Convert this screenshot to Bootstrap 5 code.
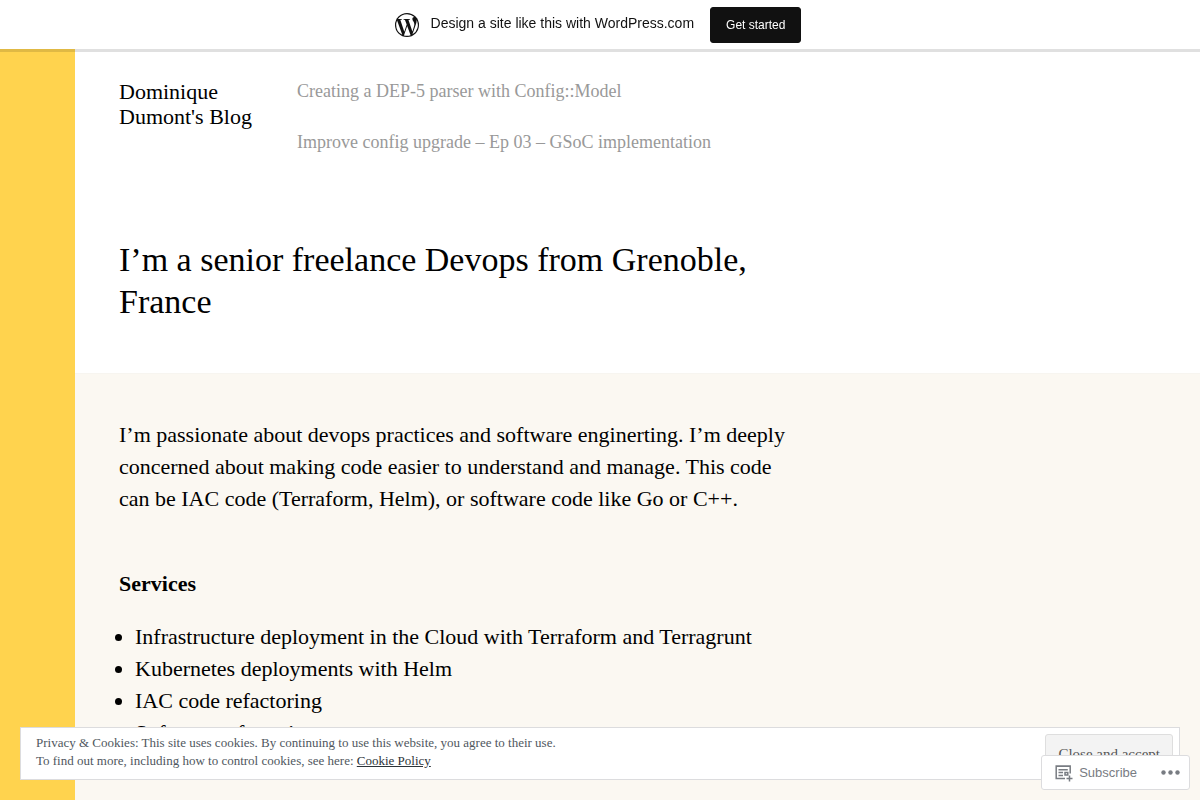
<!DOCTYPE html>
<html lang="en">
<head>
<meta charset="utf-8">
<meta name="viewport" content="width=device-width, initial-scale=1">
<title>Dominique Dumont's Blog</title>
<link href="https://cdn.jsdelivr.net/npm/bootstrap@5.3.0/dist/css/bootstrap.min.css" rel="stylesheet">
<style>
  body { font-family: "Liberation Serif", serif; color: #000; background: #fbf8f2; font-size: 22px; line-height: 32px; }
  .promo { font-family: "Liberation Sans", sans-serif; height: 49px; padding-right: 4px; box-shadow: 0 0 0 3px rgba(0,0,0,.12); font-size: 14px; line-height: 20px; color: #111; z-index: 1040; }
  .promo svg { margin-right: 12px; }
  .promo .btn { background: #111; color: #fff; font-size: 12px; line-height: 20px; padding: 7px 15px; border: 1px solid #111; border-radius: 3px; }
  .side { flex: 0 0 75px; background: #ffd34e; }
  .masthead { background: #fff; padding: 31px 44px 50px; border-bottom: 1px solid #f7f5f0; }
  .site-name { flex: 0 0 178px; font-size: 22px; line-height: 25px; color: #000; }
  .site-nav { gap: 26px; font-size: 18px; line-height: 25px; }
  .site-nav a { color: #999; }
  h1 { font-size: 34px; line-height: 42px; font-weight: 400; max-width: 662px; margin: 84px 0 0; }
  .entry { padding: 45px 44px 35px; max-width: 760px; }
  .entry p { margin-bottom: 53px; }
  h2 { font-size: 22px; line-height: 32px; font-weight: 700; margin-bottom: 21px; }
  .entry ul { padding-left: 16px; margin: 0; }
  .consent { margin: 20px; height: 53px; padding: 6px 6px 6px 15px; border: 1px solid #dcdcde; color: #50575e; font-size: 13px; line-height: 18px; }
  .consent a { color: #2c3338; }
  .consent .btn { align-self: flex-start; flex: none; font-size: 15px; line-height: 24px; padding: 7px 12px; color: #555; background: #f3f3f3; border: 1px solid #dedede; border-radius: 3px; }
  .follow { margin: 10px; height: 35px; padding: 0 9px 0 12px; font-family: "Liberation Sans", sans-serif; border: 1px solid #dcdcde; border-radius: 3px; z-index: 1050; }
  .follow button { font-size: 13px; line-height: 20px; color: #787c82; }
</style>
</head>
<body>
<div class="promo fixed-top bg-white d-flex justify-content-center align-items-center">
  <svg width="24" height="24" viewBox="0.4 0.4 15.2 15.2" aria-hidden="true">
    <circle cx="8" cy="8" r="7.6" fill="#111"/>
    <path fill="#fff" d="M12.633 7.653c0-.848-.305-1.435-.566-1.892l-.08-.13c-.317-.51-.594-.958-.594-1.48 0-.63.478-1.218 1.152-1.218q.03 0 .058.003l.031.003A6.84 6.84 0 0 0 8 1.137 6.86 6.86 0 0 0 2.266 4.23c.16.005.313.009.442.009.717 0 1.828-.087 1.828-.087.37-.022.414.521.044.565 0 0-.371.044-.785.065l2.5 7.434 1.5-4.506-1.07-2.929c-.369-.022-.719-.065-.719-.065-.37-.022-.326-.588.043-.566 0 0 1.134.087 1.808.087.718 0 1.83-.087 1.83-.087.37-.022.413.522.043.566 0 0-.372.043-.785.065l2.48 7.377.684-2.287.054-.173c.27-.86.469-1.495.469-2.046zM1.137 8a6.86 6.86 0 0 0 3.868 6.176L1.73 5.206A6.8 6.8 0 0 0 1.137 8M6.061 14.583 8.121 8.6l2.109 5.78q.02.05.049.094a6.85 6.85 0 0 1-4.218.109m7.96-9.876q.046.328.047.706c0 .696-.13 1.479-.522 2.458l-2.096 6.06a6.86 6.86 0 0 0 2.572-9.224"/>
  </svg>
  <span class="me-3 pb-1">Design a site like this with WordPress.com</span>
  <button type="button" class="btn">Get started</button>
</div>

<div class="d-flex min-vh-100">
  <div class="side"></div>
  <div class="flex-grow-1 pt-5">
    <header class="masthead">
      <div class="d-flex">
        <a href="#" class="site-name text-decoration-none">Dominique<br>Dumont's Blog</a>
        <nav class="site-nav d-flex flex-column">
          <a href="#" class="text-decoration-none">Creating a DEP-5 parser with Config::Model</a>
          <a href="#" class="text-decoration-none">Improve config upgrade – Ep 03 – GSoC implementation</a>
        </nav>
      </div>
      <h1>I’m a senior freelance Devops from Grenoble, France</h1>
    </header>
    <main class="entry">
      <p>I’m passionate about devops practices and software enginerting. I’m deeply concerned about making code easier to understand and manage. This code can be IAC code (Terraform, Helm), or software code like Go or C++.</p>
      <h2>Services</h2>
      <ul>
        <li>Infrastructure deployment in the Cloud with Terraform and Terragrunt</li>
        <li>Kubernetes deployments with Helm</li>
        <li>IAC code refactoring</li>
        <li>Software refactoring</li>
      </ul>
    </main>
  </div>
</div>

<div class="consent fixed-bottom bg-white d-flex justify-content-between">
  <div>Privacy &amp; Cookies: This site uses cookies. By continuing to use this website, you agree to their use.<br>To find out more, including how to control cookies, see here: <a href="#">Cookie Policy</a></div>
  <button type="button" class="btn">Close and accept</button>
</div>

<div class="follow position-fixed bottom-0 end-0 bg-white d-flex align-items-center">
  <button type="button" class="btn border-0 p-0 d-flex align-items-center">
    <svg class="me-1" width="21" height="20" viewBox="0 0 21 20" fill="none" stroke="#787c82" stroke-width="1.5" aria-hidden="true">
      <path d="M11 15.5H2.2V3h14v7.500M2 3.200h14.400M4.500 6.700h9.300M4.500 9.500h4.500M4.500 12.500h4.500M15.500 12.500v6M12.500 15.500h6"/><path d="M11 9.500h2.800v2.500H11z"/>
    </svg>
    <span>Subscribe</span>
  </button>
  <button type="button" class="btn border-0 p-0 ms-4 d-flex" aria-label="More options">
    <svg width="19" height="10" viewBox="0 0 19 10" fill="#787c82" aria-hidden="true"><circle cx="2.500" cy="4.500" r="2.200"/><circle cx="9.500" cy="4.500" r="2.200"/><circle cx="16.500" cy="4.500" r="2.200"/></svg>
  </button>
</div>
<script src="https://cdn.jsdelivr.net/npm/bootstrap@5.3.0/dist/js/bootstrap.bundle.min.js"></script>
</body>
</html>
